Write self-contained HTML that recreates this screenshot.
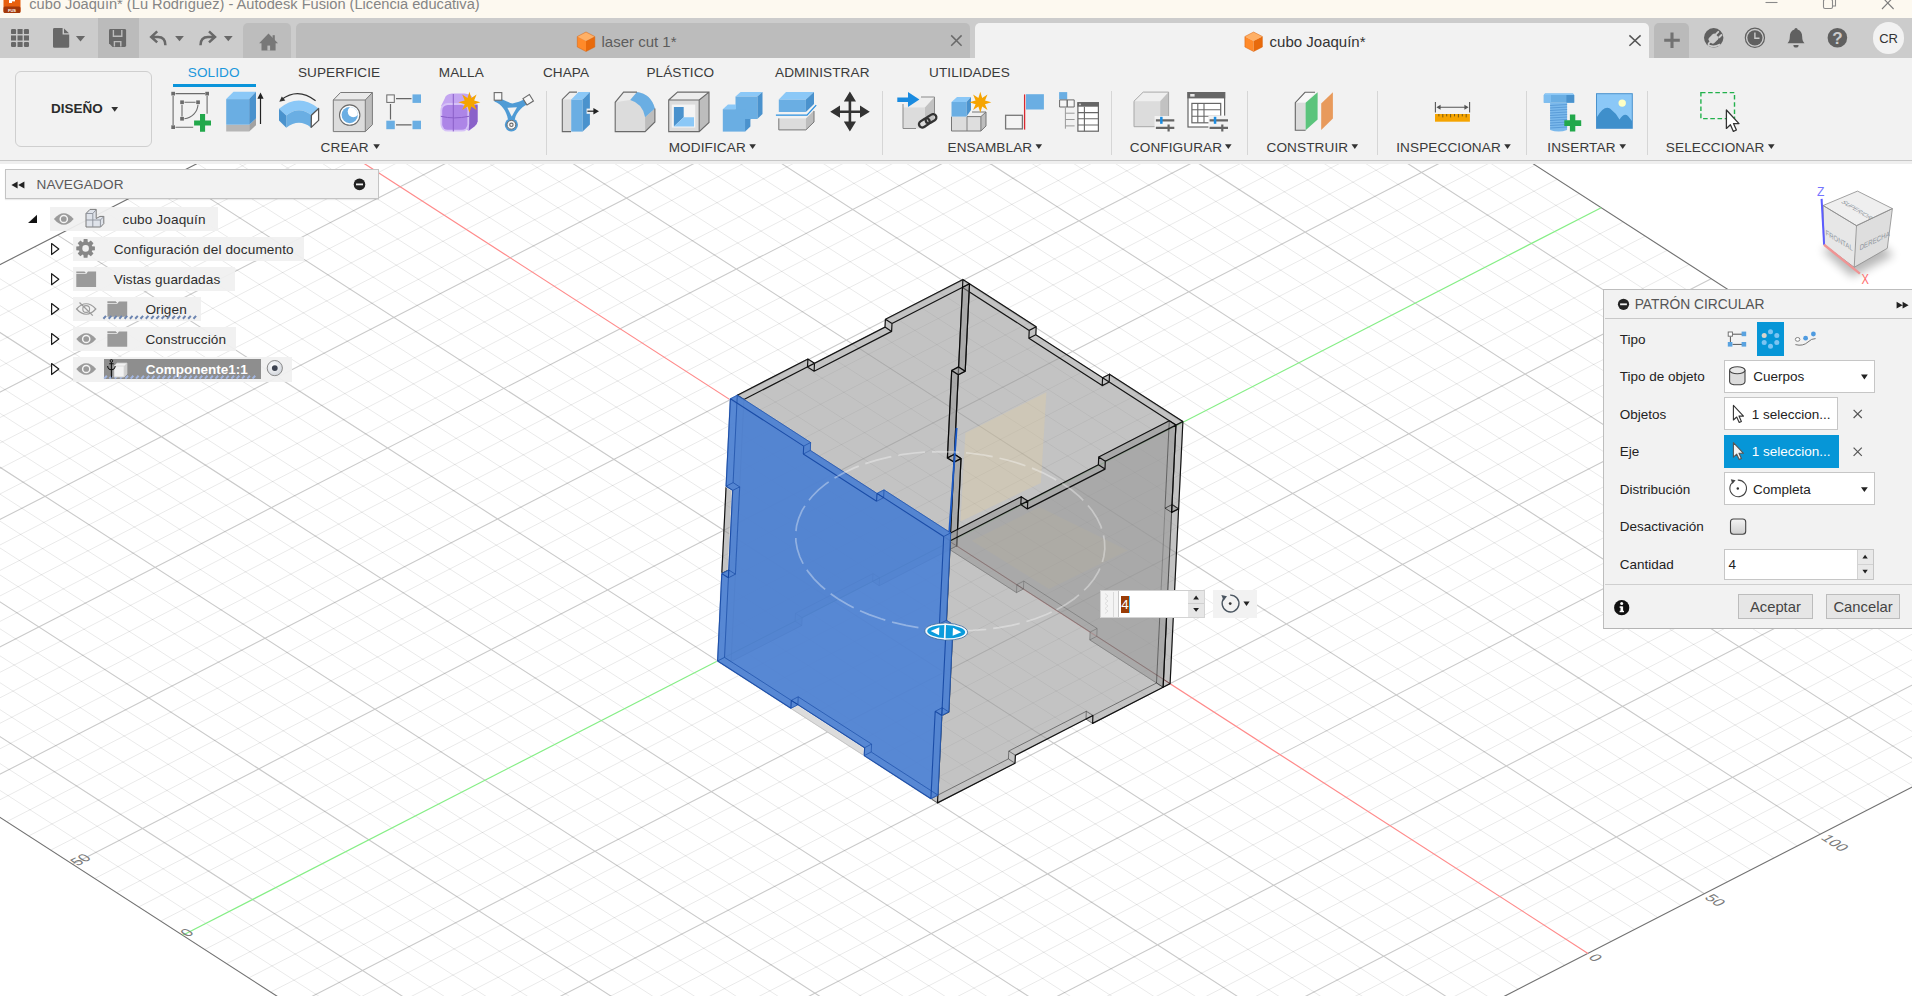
<!DOCTYPE html>
<html lang="es"><head><meta charset="utf-8"><title>cubo Joaquín - Autodesk Fusion</title>
<style>
html,body{margin:0;padding:0}
body{width:1912px;height:996px;overflow:hidden;background:#fff;position:relative;font-family:"Liberation Sans",sans-serif;font-size:13.6px;color:#3a3a3a}
#cv{position:absolute;left:0;top:0;width:1912px;height:996px}

.t{position:absolute;white-space:nowrap;line-height:20px;height:20px}
.b{position:absolute;box-sizing:border-box}
svg.ov{position:absolute;left:0;top:0;overflow:visible}

</style></head><body>
<svg id="cv" width="1912" height="996" viewBox="0 0 1912 996">
<path d="M-455.2,523.6 L963.3,-204 M-433.2,537.8 L985.3,-189.8 M-411.2,552 L1007.3,-175.6 M-389.2,566.2 L1029.3,-161.4 M-345.2,594.6 L1073.3,-133 M-323.2,608.8 L1095.3,-118.8 M-301.2,623 L1117.3,-104.6 M-279.2,637.2 L1139.3,-90.4 M-235.2,665.6 L1183.3,-62 M-213.2,679.8 L1205.3,-47.8 M-191.2,694 L1227.3,-33.6 M-169.2,708.2 L1249.3,-19.4 M-125.2,736.5 L1293.3,9 M-103.2,750.7 L1315.3,23.2 M-81.2,764.9 L1337.3,37.4 M-59.2,779.1 L1359.3,51.6 M-15.2,807.5 L1403.3,80 M6.7,821.7 L1425.2,94.1 M28.7,835.9 L1447.2,108.3 M50.7,850.1 L1469.2,122.5 M94.7,878.5 L1513.2,150.9 M116.7,892.7 L1535.2,165.1 M138.7,906.9 L1557.2,179.3 M160.7,921.1 L1579.2,193.5 M204.7,949.5 L1623.2,221.9 M226.7,963.7 L1645.2,236.1 M248.7,977.9 L1667.2,250.3 M270.7,992.1 L1689.2,264.5 M314.7,1020.5 L1733.2,292.9 M336.7,1034.7 L1755.2,307.1 M358.7,1048.8 L1777.2,321.3 M380.7,1063 L1799.2,335.5 M424.7,1091.4 L1843.2,363.9 M446.7,1105.6 L1865.2,378.1 M468.7,1119.8 L1887.2,392.3 M490.7,1134 L1909.2,406.5 M534.7,1162.4 L1953.2,434.8 M556.7,1176.6 L1975.2,449 M578.7,1190.8 L1997.2,463.2 M600.7,1205 L2019.2,477.4 M644.7,1233.4 L2063.1,505.8 M666.6,1247.6 L2085.1,520 M688.6,1261.8 L2107.1,534.2 M710.6,1276 L2129.1,548.4 M754.6,1304.4 L2173.1,576.8 M776.6,1318.6 L2195.1,591 M798.6,1332.8 L2217.1,605.2 M-453.9,497.5 L843.9,1335 M-430.7,485.6 L867.1,1323.1 M-384.2,461.7 L913.6,1299.2 M-360.9,449.8 L936.9,1287.3 M-337.7,437.9 L960.1,1275.4 M-314.4,425.9 L983.4,1263.5 M-267.9,402.1 L1029.9,1239.6 M-244.6,390.1 L1053.2,1227.7 M-221.4,378.2 L1076.4,1215.8 M-198.1,366.3 L1099.7,1203.8 M-151.6,342.4 L1146.2,1180 M-128.4,330.5 L1169.4,1168 M-105.1,318.6 L1192.7,1156.1 M-81.9,306.6 L1215.9,1144.2 M-35.3,282.8 L1262.5,1120.3 M-12.1,270.9 L1285.7,1108.4 M11.2,258.9 L1309,1096.5 M34.4,247 L1332.2,1084.6 M80.9,223.2 L1378.7,1060.7 M104.2,211.2 L1402,1048.8 M127.4,199.3 L1425.2,1036.8 M150.7,187.4 L1448.5,1024.9 M197.2,163.5 L1495,1001.1 M220.4,151.6 L1518.2,989.1 M243.7,139.7 L1541.5,977.2 M267,127.7 L1564.8,965.3 M313.5,103.9 L1611.3,941.4 M336.7,92 L1634.5,929.5 M360,80 L1657.8,917.6 M383.2,68.1 L1681,905.6 M429.7,44.2 L1727.5,881.8 M453,32.3 L1750.8,869.9 M476.2,20.4 L1774,857.9 M499.5,8.5 L1797.3,846 M546,-15.4 L1843.8,822.2 M569.3,-27.3 L1867.1,810.2 M592.5,-39.2 L1890.3,798.3 M615.8,-51.2 L1913.6,786.4 M662.3,-75 L1960.1,762.5 M685.5,-87 L1983.3,750.6 M708.8,-98.9 L2006.6,738.7 M732,-110.8 L2029.8,726.7 M778.5,-134.7 L2076.3,702.9 M801.8,-146.6 L2099.6,691 M825.1,-158.5 L2122.9,679 M848.3,-170.4 L2146.1,667.1 M894.8,-194.3 L2192.6,643.2 M918.1,-206.2 L2215.9,631.3" stroke="#000" stroke-opacity=".085" stroke-width="1" fill="none"/>
<path d="M-367.2,580.4 L1051.3,-147.2 M-257.2,651.4 L1161.3,-76.2 M-147.2,722.3 L1271.3,-5.2 M-37.2,793.3 L1381.3,65.8 M72.7,864.3 L1491.2,136.7 M292.7,1006.3 L1711.2,278.7 M402.7,1077.2 L1821.2,349.7 M512.7,1148.2 L1931.2,420.6 M622.7,1219.2 L2041.2,491.6 M732.6,1290.2 L2151.1,562.6 M-407.4,473.6 L890.4,1311.2 M-291.1,414 L1006.7,1251.5 M-174.9,354.4 L1122.9,1191.9 M-58.6,294.7 L1239.2,1132.3 M57.7,235.1 L1355.5,1072.6 M173.9,175.4 L1471.7,1013 M406.5,56.2 L1704.3,893.7 M522.7,-3.5 L1820.5,834.1 M639,-63.1 L1936.8,774.4 M755.3,-122.7 L2053.1,714.8 M871.6,-182.4 L2169.4,655.2" stroke="#000" stroke-opacity=".21" stroke-width="1.1" fill="none"/>
<path d="M-477.2,509.4 L820.6,1347 L2239.1,619.4 L941.3,-218.2 Z" stroke="#727272" stroke-width="1.15" fill="none"/>
<path d="M290.2,115.8 L1588,953.4" stroke="#ff8a8a" stroke-width="1.2" fill="none"/>
<path d="M182.7,935.3 L1601.2,207.7" stroke="#86ee86" stroke-width="1.2" fill="none"/>
<g opacity=".56"><path d="M1170.1,683.6 L1096.8,636.3 L1097.1,628.5 L1023.8,581.1 L1023.4,589 L956.7,545.9 L961,458.6 L954.4,454.3 L958.6,366.9 L965.2,371.2 L969.5,283.8 L1036.2,326.8 L1035.8,334.7 L1109.2,382 L1109.5,374.2 L1182.9,421.5 L1178.6,508.9 L1172,504.6 L1167.7,592 L1174.3,596.3 Z M1163.1,687.2 L1089.8,639.9 L1090.2,632 L1016.8,584.7 L1016.5,592.6 L949.7,549.5 L954,462.1 L947.4,457.9 L951.7,370.5 L958.3,374.7 L962.5,287.4 L1029.2,330.4 L1028.9,338.3 L1102.2,385.6 L1102.6,377.7 L1175.9,425.1 L1171.6,512.4 L1165,508.2 L1160.8,595.6 L1167.4,599.8 Z M1163.1,687.2 L1089.8,639.9 L1096.8,636.3 L1170.1,683.6 Z M1089.8,639.9 L1090.2,632 L1097.1,628.5 L1096.8,636.3 Z M1090.2,632 L1016.8,584.7 L1023.8,581.1 L1097.1,628.5 Z M1023.8,581.1 L1023.4,589 L1016.5,592.6 L1016.8,584.7 Z M1016.5,592.6 L949.7,549.5 L956.7,545.9 L1023.4,589 Z M949.7,549.5 L954,462.1 L961,458.6 L956.7,545.9 Z M954,462.1 L947.4,457.9 L954.4,454.3 L961,458.6 Z M947.4,457.9 L951.7,370.5 L958.6,366.9 L954.4,454.3 Z M958.6,366.9 L965.2,371.2 L958.3,374.7 L951.7,370.5 Z M958.3,374.7 L962.5,287.4 L969.5,283.8 L965.2,371.2 Z M969.5,283.8 L1036.2,326.8 L1029.2,330.4 L962.5,287.4 Z M1036.2,326.8 L1035.8,334.7 L1028.9,338.3 L1029.2,330.4 Z M1035.8,334.7 L1109.2,382 L1102.2,385.6 L1028.9,338.3 Z M1102.2,385.6 L1102.6,377.7 L1109.5,374.2 L1109.2,382 Z M1109.5,374.2 L1182.9,421.5 L1175.9,425.1 L1102.6,377.7 Z M1182.9,421.5 L1178.6,508.9 L1171.6,512.4 L1175.9,425.1 Z M1171.6,512.4 L1165,508.2 L1172,504.6 L1178.6,508.9 Z M1172,504.6 L1167.7,592 L1160.8,595.6 L1165,508.2 Z M1167.7,592 L1174.3,596.3 L1167.4,599.8 L1160.8,595.6 Z M1174.3,596.3 L1170.1,683.6 L1163.1,687.2 L1167.4,599.8 Z" fill="#969696" stroke="#969696" stroke-width=".6" stroke-linejoin="round"/></g>
<path d="M1170.1,683.6 L1096.8,636.3 M1163.1,687.2 L1089.8,639.9 M1096.8,636.3 L1097.1,628.5 M1089.8,639.9 L1090.2,632 M1096.8,636.3 L1089.8,639.9 M1097.1,628.5 L1023.8,581.1 M1090.2,632 L1016.8,584.7 M1097.1,628.5 L1090.2,632 M1023.8,581.1 L1023.4,589 M1016.8,584.7 L1016.5,592.6 M1023.8,581.1 L1016.8,584.7 M1023.4,589 L956.7,545.9 M1016.5,592.6 L949.7,549.5 M1023.4,589 L1016.5,592.6 M956.7,545.9 L949.7,549.5 M1171.6,512.4 L1165,508.2 M1178.6,508.9 L1171.6,512.4 M1172,504.6 L1167.7,592 M1165,508.2 L1160.8,595.6 M1172,504.6 L1165,508.2 M1167.7,592 L1174.3,596.3 M1160.8,595.6 L1167.4,599.8 M1167.7,592 L1160.8,595.6" stroke="#000" stroke-opacity=".42" stroke-width="1" fill="none"/>
<path d="M1170.1,683.6 L1163.1,687.2 M956.7,545.9 L961,458.6 M949.7,549.5 L954,462.1 M961,458.6 L954.4,454.3 M954,462.1 L947.4,457.9 M961,458.6 L954,462.1 M954.4,454.3 L958.6,366.9 M947.4,457.9 L951.7,370.5 M954.4,454.3 L947.4,457.9 M958.6,366.9 L965.2,371.2 M951.7,370.5 L958.3,374.7 M958.6,366.9 L951.7,370.5 M965.2,371.2 L969.5,283.8 M958.3,374.7 L962.5,287.4 M965.2,371.2 L958.3,374.7 M969.5,283.8 L1036.2,326.8 M962.5,287.4 L1029.2,330.4 M969.5,283.8 L962.5,287.4 M1036.2,326.8 L1035.8,334.7 M1029.2,330.4 L1028.9,338.3 M1036.2,326.8 L1029.2,330.4 M1035.8,334.7 L1109.2,382 M1028.9,338.3 L1102.2,385.6 M1035.8,334.7 L1028.9,338.3 M1109.2,382 L1109.5,374.2 M1102.2,385.6 L1102.6,377.7 M1109.2,382 L1102.2,385.6 M1109.5,374.2 L1182.9,421.5 M1102.6,377.7 L1175.9,425.1 M1109.5,374.2 L1102.6,377.7 M1182.9,421.5 L1178.6,508.9 M1175.9,425.1 L1171.6,512.4 M1182.9,421.5 L1175.9,425.1 M1178.6,508.9 L1172,504.6 M1174.3,596.3 L1170.1,683.6 M1167.4,599.8 L1163.1,687.2 M1174.3,596.3 L1167.4,599.8" stroke="#000" stroke-opacity=".9" stroke-width="1.2" fill="none" stroke-linecap="round"/>
<g opacity=".56"><path d="M950.1,541.7 L872.6,581.4 L873,573.6 L795.5,613.3 L795.1,621.2 L724.5,657.4 L728.8,570 L721.8,573.6 L726.1,486.2 L733.1,482.6 L737.3,395.2 L807.9,359 L807.5,366.9 L885,327.1 L885.4,319.3 L962.9,279.5 L958.6,366.9 L951.7,370.5 L947.4,457.9 L954.4,454.3 Z M956.7,545.9 L879.2,585.7 L879.6,577.8 L802.1,617.6 L801.7,625.5 L731.1,661.6 L735.4,574.2 L728.4,577.8 L732.7,490.4 L739.7,486.9 L743.9,399.5 L814.5,363.3 L814.1,371.2 L891.6,331.4 L892,323.5 L969.5,283.8 L965.2,371.2 L958.3,374.7 L954,462.1 L961,458.6 Z M956.7,545.9 L879.2,585.7 L872.6,581.4 L950.1,541.7 Z M872.6,581.4 L873,573.6 L879.6,577.8 L879.2,585.7 Z M879.6,577.8 L802.1,617.6 L795.5,613.3 L873,573.6 Z M802.1,617.6 L801.7,625.5 L795.1,621.2 L795.5,613.3 Z M801.7,625.5 L731.1,661.6 L724.5,657.4 L795.1,621.2 Z M724.5,657.4 L728.8,570 L735.4,574.2 L731.1,661.6 Z M735.4,574.2 L728.4,577.8 L721.8,573.6 L728.8,570 Z M721.8,573.6 L726.1,486.2 L732.7,490.4 L728.4,577.8 Z M726.1,486.2 L733.1,482.6 L739.7,486.9 L732.7,490.4 Z M733.1,482.6 L737.3,395.2 L743.9,399.5 L739.7,486.9 Z M737.3,395.2 L807.9,359 L814.5,363.3 L743.9,399.5 Z M814.5,363.3 L814.1,371.2 L807.5,366.9 L807.9,359 Z M807.5,366.9 L885,327.1 L891.6,331.4 L814.1,371.2 Z M885,327.1 L885.4,319.3 L892,323.5 L891.6,331.4 Z M885.4,319.3 L962.9,279.5 L969.5,283.8 L892,323.5 Z M969.5,283.8 L965.2,371.2 L958.6,366.9 L962.9,279.5 Z M965.2,371.2 L958.3,374.7 L951.7,370.5 L958.6,366.9 Z M958.3,374.7 L954,462.1 L947.4,457.9 L951.7,370.5 Z M947.4,457.9 L954.4,454.3 L961,458.6 L954,462.1 Z M961,458.6 L956.7,545.9 L950.1,541.7 L954.4,454.3 Z" fill="#969696" stroke="#969696" stroke-width=".6" stroke-linejoin="round"/></g>
<path d="M950.1,541.7 L872.6,581.4 M956.7,545.9 L879.2,585.7 M950.1,541.7 L956.7,545.9 M872.6,581.4 L873,573.6 M879.2,585.7 L879.6,577.8 M872.6,581.4 L879.2,585.7 M873,573.6 L795.5,613.3 M879.6,577.8 L802.1,617.6 M873,573.6 L879.6,577.8 M795.5,613.3 L795.1,621.2 M802.1,617.6 L801.7,625.5 M795.5,613.3 L802.1,617.6 M795.1,621.2 L724.5,657.4 M801.7,625.5 L731.1,661.6 M795.1,621.2 L801.7,625.5 M724.5,657.4 L728.8,570 M731.1,661.6 L735.4,574.2 M724.5,657.4 L731.1,661.6 M735.4,574.2 L728.4,577.8 M728.8,570 L735.4,574.2 M728.4,577.8 L732.7,490.4 M726.1,486.2 L733.1,482.6 M732.7,490.4 L739.7,486.9 M726.1,486.2 L732.7,490.4 M733.1,482.6 L737.3,395.2 M739.7,486.9 L743.9,399.5 M733.1,482.6 L739.7,486.9" stroke="#000" stroke-opacity=".42" stroke-width="1" fill="none"/>
<path d="M728.8,570 L721.8,573.6 M721.8,573.6 L726.1,486.2 M721.8,573.6 L728.4,577.8 M737.3,395.2 L807.9,359 M743.9,399.5 L814.5,363.3 M737.3,395.2 L743.9,399.5 M807.9,359 L807.5,366.9 M814.5,363.3 L814.1,371.2 M807.9,359 L814.5,363.3 M807.5,366.9 L885,327.1 M814.1,371.2 L891.6,331.4 M807.5,366.9 L814.1,371.2 M885,327.1 L885.4,319.3 M891.6,331.4 L892,323.5 M885,327.1 L891.6,331.4 M885.4,319.3 L962.9,279.5 M892,323.5 L969.5,283.8 M885.4,319.3 L892,323.5 M962.9,279.5 L958.6,366.9 M969.5,283.8 L965.2,371.2 M962.9,279.5 L969.5,283.8 M958.6,366.9 L951.7,370.5 M965.2,371.2 L958.3,374.7 M958.6,366.9 L965.2,371.2 M951.7,370.5 L947.4,457.9 M958.3,374.7 L954,462.1 M951.7,370.5 L958.3,374.7 M947.4,457.9 L954.4,454.3 M954,462.1 L961,458.6 M947.4,457.9 L954,462.1 M954.4,454.3 L950.1,541.7 M961,458.6 L956.7,545.9 M954.4,454.3 L961,458.6" stroke="#000" stroke-opacity=".9" stroke-width="1.2" fill="none" stroke-linecap="round"/>
<path d="M965.4,433 L1046.4,392.2 L1040.9,482.9 L960.5,521.5 Z" fill="#e8cf9a" fill-opacity=".3"/>
<path d="M971.8,540.8 L1039.3,507 L1127.7,550.4 L1049,589 Z" fill="#e8cf9a" fill-opacity=".24"/>
<g opacity=".56"><path d="M941.8,715.5 L948.8,711.9 L953,624.6 L946.1,628.1 L950.3,540.8 L1027.8,501 L1027.4,508.9 L1105,469.1 L1105.3,461.2 L1175.9,425.1 L1171.6,512.4 L1178.6,508.9 L1174.3,596.3 L1167.4,599.8 L1163.1,687.2 L1092.6,723.4 L1092.9,715.5 L1015.4,755.3 L1015,763.2 L937.5,802.9 Z M935.2,711.3 L942.2,707.7 L946.4,620.3 L939.5,623.9 L943.7,536.5 L1021.2,496.7 L1020.8,504.6 L1098.4,464.8 L1098.7,457 L1169.3,420.8 L1165,508.2 L1172,504.6 L1167.7,592 L1160.8,595.6 L1156.5,683 L1086,719.1 L1086.3,711.3 L1008.8,751 L1008.4,758.9 L930.9,798.7 Z M930.9,798.7 L1008.4,758.9 L1015,763.2 L937.5,802.9 Z M1008.4,758.9 L1008.8,751 L1015.4,755.3 L1015,763.2 Z M1008.8,751 L1086.3,711.3 L1092.9,715.5 L1015.4,755.3 Z M1092.9,715.5 L1092.6,723.4 L1086,719.1 L1086.3,711.3 Z M1086,719.1 L1156.5,683 L1163.1,687.2 L1092.6,723.4 Z M1156.5,683 L1160.8,595.6 L1167.4,599.8 L1163.1,687.2 Z M1160.8,595.6 L1167.7,592 L1174.3,596.3 L1167.4,599.8 Z M1167.7,592 L1172,504.6 L1178.6,508.9 L1174.3,596.3 Z M1178.6,508.9 L1171.6,512.4 L1165,508.2 L1172,504.6 Z M1165,508.2 L1169.3,420.8 L1175.9,425.1 L1171.6,512.4 Z M1175.9,425.1 L1105.3,461.2 L1098.7,457 L1169.3,420.8 Z M1105.3,461.2 L1105,469.1 L1098.4,464.8 L1098.7,457 Z M1105,469.1 L1027.4,508.9 L1020.8,504.6 L1098.4,464.8 Z M1020.8,504.6 L1021.2,496.7 L1027.8,501 L1027.4,508.9 Z M1027.8,501 L950.3,540.8 L943.7,536.5 L1021.2,496.7 Z M950.3,540.8 L946.1,628.1 L939.5,623.9 L943.7,536.5 Z M939.5,623.9 L946.4,620.3 L953,624.6 L946.1,628.1 Z M953,624.6 L948.8,711.9 L942.2,707.7 L946.4,620.3 Z M948.8,711.9 L941.8,715.5 L935.2,711.3 L942.2,707.7 Z M941.8,715.5 L937.5,802.9 L930.9,798.7 L935.2,711.3 Z" fill="#969696" stroke="#969696" stroke-width=".6" stroke-linejoin="round"/></g>
<path d="M930.9,798.7 L1008.4,758.9 M937.5,802.9 L930.9,798.7 M1008.4,758.9 L1008.8,751 M1015,763.2 L1008.4,758.9 M1008.8,751 L1086.3,711.3 M1015.4,755.3 L1008.8,751 M1086.3,711.3 L1086,719.1 M1092.9,715.5 L1086.3,711.3 M1086,719.1 L1156.5,683 M1092.6,723.4 L1086,719.1 M1156.5,683 L1160.8,595.6 M1163.1,687.2 L1156.5,683 M1160.8,595.6 L1167.7,592 M1167.4,599.8 L1160.8,595.6 M1167.7,592 L1172,504.6 M1174.3,596.3 L1167.7,592 M1172,504.6 L1165,508.2 M1178.6,508.9 L1172,504.6 M1165,508.2 L1169.3,420.8 M1171.6,512.4 L1165,508.2 M943.7,536.5 L939.5,623.9 M939.5,623.9 L946.4,620.3 M946.1,628.1 L939.5,623.9 M946.4,620.3 L942.2,707.7 M953,624.6 L946.4,620.3 M942.2,707.7 L935.2,711.3 M948.8,711.9 L942.2,707.7 M935.2,711.3 L930.9,798.7 M941.8,715.5 L935.2,711.3" stroke="#000" stroke-opacity=".42" stroke-width="1" fill="none"/>
<path d="M937.5,802.9 L1015,763.2 M1015,763.2 L1015.4,755.3 M1015.4,755.3 L1092.9,715.5 M1092.9,715.5 L1092.6,723.4 M1092.6,723.4 L1163.1,687.2 M1163.1,687.2 L1167.4,599.8 M1167.4,599.8 L1174.3,596.3 M1174.3,596.3 L1178.6,508.9 M1178.6,508.9 L1171.6,512.4 M1171.6,512.4 L1175.9,425.1 M1175.9,425.1 L1105.3,461.2 M1169.3,420.8 L1098.7,457 M1175.9,425.1 L1169.3,420.8 M1105.3,461.2 L1105,469.1 M1098.7,457 L1098.4,464.8 M1105.3,461.2 L1098.7,457 M1105,469.1 L1027.4,508.9 M1098.4,464.8 L1020.8,504.6 M1105,469.1 L1098.4,464.8 M1027.4,508.9 L1027.8,501 M1020.8,504.6 L1021.2,496.7 M1027.4,508.9 L1020.8,504.6 M1027.8,501 L950.3,540.8 M1021.2,496.7 L943.7,536.5 M1027.8,501 L1021.2,496.7 M950.3,540.8 L946.1,628.1 M950.3,540.8 L943.7,536.5 M946.1,628.1 L953,624.6 M953,624.6 L948.8,711.9 M948.8,711.9 L941.8,715.5 M941.8,715.5 L937.5,802.9" stroke="#000" stroke-opacity=".9" stroke-width="1.2" fill="none" stroke-linecap="round"/>
<path d="M791.3,700.4 L864.6,747.7 L864.2,755.6 L790.9,708.3 Z" fill="#dcdcdc" stroke="#bdbdbd" stroke-width=".6"/>
<path d="M956.6,428 L949,536" stroke="#1a58c4" stroke-width="1.9" fill="none"/>
<path d="M717.6,661 L790.9,708.3 L791.3,700.4 L864.6,747.7 L864.2,755.6 L930.9,798.7 L935.2,711.3 L941.8,715.5 L946.1,628.1 L939.5,623.9 L943.7,536.5 L877,493.4 L876.6,501.3 L803.3,454 L803.7,446.1 L730.4,398.8 L726.1,486.2 L732.7,490.4 L728.4,577.8 L721.8,573.6 Z" fill="none" stroke="#f0f0f0" stroke-opacity=".8" stroke-width="2.2" stroke-linejoin="round"/>
<g opacity=".95"><path d="M721.8,573.6 L728.4,577.8 L732.7,490.4 L726.1,486.2 L730.4,398.8 L803.7,446.1 L803.3,454 L876.6,501.3 L877,493.4 L943.7,536.5 L939.5,623.9 L946.1,628.1 L941.8,715.5 L935.2,711.3 L930.9,798.7 L864.2,755.6 L864.6,747.7 L791.3,700.4 L790.9,708.3 L717.6,661 Z M728.8,570 L735.4,574.2 L739.7,486.9 L733.1,482.6 L737.3,395.2 L810.6,442.5 L810.3,450.4 L883.6,497.7 L884,489.9 L950.7,532.9 L946.4,620.3 L953,624.6 L948.8,711.9 L942.2,707.7 L937.9,795.1 L871.2,752 L871.6,744.1 L798.2,696.8 L797.9,704.7 L724.5,657.4 Z M724.5,657.4 L797.9,704.7 L790.9,708.3 L717.6,661 Z M790.9,708.3 L791.3,700.4 L798.2,696.8 L797.9,704.7 Z M798.2,696.8 L871.6,744.1 L864.6,747.7 L791.3,700.4 Z M871.6,744.1 L871.2,752 L864.2,755.6 L864.6,747.7 Z M871.2,752 L937.9,795.1 L930.9,798.7 L864.2,755.6 Z M930.9,798.7 L935.2,711.3 L942.2,707.7 L937.9,795.1 Z M942.2,707.7 L948.8,711.9 L941.8,715.5 L935.2,711.3 Z M941.8,715.5 L946.1,628.1 L953,624.6 L948.8,711.9 Z M946.1,628.1 L939.5,623.9 L946.4,620.3 L953,624.6 Z M939.5,623.9 L943.7,536.5 L950.7,532.9 L946.4,620.3 Z M943.7,536.5 L877,493.4 L884,489.9 L950.7,532.9 Z M884,489.9 L883.6,497.7 L876.6,501.3 L877,493.4 Z M876.6,501.3 L803.3,454 L810.3,450.4 L883.6,497.7 Z M803.3,454 L803.7,446.1 L810.6,442.5 L810.3,450.4 Z M803.7,446.1 L730.4,398.8 L737.3,395.2 L810.6,442.5 Z M737.3,395.2 L733.1,482.6 L726.1,486.2 L730.4,398.8 Z M733.1,482.6 L739.7,486.9 L732.7,490.4 L726.1,486.2 Z M739.7,486.9 L735.4,574.2 L728.4,577.8 L732.7,490.4 Z M728.4,577.8 L721.8,573.6 L728.8,570 L735.4,574.2 Z M728.8,570 L724.5,657.4 L717.6,661 L721.8,573.6 Z" fill="#4f82d2" stroke="#4f82d2" stroke-width=".6" stroke-linejoin="round"/></g>
<path d="M724.5,657.4 L797.9,704.7 M717.6,661 L724.5,657.4 M797.9,704.7 L798.2,696.8 M790.9,708.3 L797.9,704.7 M798.2,696.8 L871.6,744.1 M791.3,700.4 L798.2,696.8 M871.6,744.1 L871.2,752 M864.6,747.7 L871.6,744.1 M871.2,752 L937.9,795.1 M864.2,755.6 L871.2,752 M937.9,795.1 L942.2,707.7 M930.9,798.7 L937.9,795.1 M942.2,707.7 L948.8,711.9 M935.2,711.3 L942.2,707.7 M948.8,711.9 L953,624.6 M941.8,715.5 L948.8,711.9 M953,624.6 L946.4,620.3 M946.1,628.1 L953,624.6 M946.4,620.3 L950.7,532.9 M939.5,623.9 L946.4,620.3 M950.7,532.9 L884,489.9 M943.7,536.5 L950.7,532.9 M884,489.9 L883.6,497.7 M877,493.4 L884,489.9 M883.6,497.7 L810.3,450.4 M876.6,501.3 L883.6,497.7 M810.3,450.4 L810.6,442.5 M803.3,454 L810.3,450.4 M810.6,442.5 L737.3,395.2 M803.7,446.1 L810.6,442.5 M737.3,395.2 L733.1,482.6 M730.4,398.8 L737.3,395.2 M733.1,482.6 L739.7,486.9 M726.1,486.2 L733.1,482.6 M739.7,486.9 L735.4,574.2 M732.7,490.4 L739.7,486.9 M735.4,574.2 L728.8,570 M728.4,577.8 L735.4,574.2 M728.8,570 L724.5,657.4 M721.8,573.6 L728.8,570" stroke="#0b3f9c" stroke-opacity=".55" stroke-width="1" fill="none"/>
<path d="M717.6,661 L790.9,708.3 M790.9,708.3 L791.3,700.4 M791.3,700.4 L864.6,747.7 M864.6,747.7 L864.2,755.6 M864.2,755.6 L930.9,798.7 M930.9,798.7 L935.2,711.3 M935.2,711.3 L941.8,715.5 M941.8,715.5 L946.1,628.1 M946.1,628.1 L939.5,623.9 M939.5,623.9 L943.7,536.5 M943.7,536.5 L877,493.4 M877,493.4 L876.6,501.3 M876.6,501.3 L803.3,454 M803.3,454 L803.7,446.1 M803.7,446.1 L730.4,398.8 M730.4,398.8 L726.1,486.2 M726.1,486.2 L732.7,490.4 M732.7,490.4 L728.4,577.8 M728.4,577.8 L721.8,573.6 M721.8,573.6 L717.6,661" stroke="#0b3f9c" stroke-opacity=".8" stroke-width="1.1" fill="none"/>
<path d="M1056.5,609.8 L1065.8,604.5 L1074.3,598.7 L1081.9,592.5 L1088.5,585.9 L1094,579 L1098.4,571.8 L1101.7,564.3 L1103.8,556.7 L1104.8,549 L1104.5,541.2 L1103.2,533.4 L1100.6,525.6 L1096.9,518 L1092.1,510.5 L1086.2,503.3 L1079.3,496.4 L1071.4,489.8 L1062.5,483.6 L1052.8,477.9 L1042.4,472.6 L1031.2,467.8 L1019.4,463.6 L1007.1,460 L994.4,457 L981.3,454.7 L968,453 L954.5,452 L941,451.7 L927.6,452 L914.4,453 L901.4,454.7 L888.8,457.1 L876.7,460.1 L865.1,463.7 L854.2,467.9 L844,472.7 L834.6,477.9 L826.1,483.7 L818.5,489.9 L812,496.5 L806.5,503.4 L802,510.6 L798.8,518.1 L796.6,525.7 L795.7,533.5 L795.9,541.3 L797.3,549.1 L799.8,556.8 L803.5,564.5 L808.3,571.9 L814.2,579.1 L821.2,586 L829.1,592.6 L837.9,598.8 L847.6,604.6 L858,609.9 L869.2,614.6 L881,618.8 L893.3,622.4 L906.1,625.4 L919.1,627.7 L932.5,629.4 L945.9,630.4 L959.4,630.8 L972.8,630.4 L986.1,629.4 L999,627.7 L1011.6,625.4 L1023.8,622.4 L1035.3,618.7 L1046.3,614.5 L1056.5,609.8 Z" fill="none" stroke="#ffffff" stroke-opacity=".36" stroke-width="1.7" stroke-dasharray="27 7"/>
<text transform="matrix(0.7836 0.5057 -0.8284 0.4249 1587.6 957.7)" font-size="16" fill="#7a7a7a" font-family="Liberation Sans, sans-serif">0</text>
<text transform="matrix(0.7836 0.5057 -0.8284 0.4249 1703.8 898.0)" font-size="16" fill="#7a7a7a" font-family="Liberation Sans, sans-serif">50</text>
<text transform="matrix(0.7836 0.5057 -0.8284 0.4249 1820.1 838.4)" font-size="16" fill="#7a7a7a" font-family="Liberation Sans, sans-serif">100</text>
<text transform="matrix(0.8284 -0.4249 0.7836 0.5057 187.4 937.2)" font-size="16" fill="#7a7a7a" font-family="Liberation Sans, sans-serif">0</text>
<text transform="matrix(0.8284 -0.4249 0.7836 0.5057 77.4 866.2)" font-size="16" fill="#7a7a7a" font-family="Liberation Sans, sans-serif">50</text>
<g transform="rotate(2 946.2 631.6)"><ellipse cx="946.2" cy="631.6" rx="21.4" ry="8.5" fill="#f4f8fc" stroke="#3d6a9a" stroke-width=".8"/><ellipse cx="946.2" cy="631.6" rx="19" ry="6.6" fill="#0a9bdc"/><rect x="944.1" y="623.6" width="1.7" height="16" fill="#f4f8fc"/><path d="M930.6,631.6 L939.2,627.6 V635.6 Z M961.4,631.6 L952.8,627.6 V635.6 Z" fill="#fff"/></g>
<defs><filter id="bl" x="-30%" y="-60%" width="160%" height="220%"><feGaussianBlur stdDeviation="5"/></filter></defs>
<path d="M1822.0,250.0 L1852.0,277.0 L1894.0,255.0 L1864.0,232.0 Z" fill="#000" opacity=".28" filter="url(#bl)"/>
<path d="M1823.1,205.5 L1857.5,191.1 L1892.4,208.6 L1856.5,225.7 Z" fill="#efefef"/>
<path d="M1823.1,205.5 L1856.5,225.7 L1854.2,267.3 L1824.1,244.7 Z" fill="#e7e7e7"/>
<path d="M1856.5,225.7 L1892.4,208.6 L1887.3,248.3 L1854.2,267.3 Z" fill="#dedede"/>
<path d="M1823.1,205.5 L1857.5,191.1 L1892.4,208.6 L1887.3,248.3 L1854.2,267.3 L1824.1,244.7 Z M1823.1,205.5 L1856.5,225.7 L1892.4,208.6 L1856.5,225.7 Z M1856.5,225.7 L1854.2,267.3" fill="none" stroke="#8c8c8c" stroke-width=".8"/>
<text transform="matrix(0.2755 0.1666 -0.3229 0.1351 1840.6 202.2)" font-size="20" fill="#8d949c" font-family="Liberation Sans, sans-serif">SUPERIOR</text>
<text transform="matrix(0.2926 0.1770 0.0097 0.3799 1825.8 235.0)" font-size="20" fill="#8d949c" font-family="Liberation Sans, sans-serif">FRONTAL</text>
<text transform="matrix(0.3088 -0.1471 -0.0210 0.3794 1859.4 250.4)" font-size="20" fill="#8d949c" font-family="Liberation Sans, sans-serif">DERECHA</text>
<path d="M1824.1,244.7 L1821.6,198.9" stroke="#5c5cff" stroke-width="2"/>
<path d="M1824.1,244.7 L1859.9,273.6" stroke="#f09494" stroke-width="2.4"/>
<text x="1817" y="196" font-size="13.6" fill="#7474ff" font-family="Liberation Sans, sans-serif" textLength="7.4" lengthAdjust="spacingAndGlyphs">Z</text>
<text x="1861.6" y="284" font-size="15.4" fill="#ff6e6e" font-family="Liberation Sans, sans-serif" textLength="7.4" lengthAdjust="spacingAndGlyphs">X</text>
</svg>
<div class="b" style="left:0.0px;top:0.0px;width:1912.0px;height:18.0px;background:#fdf9f0"></div>
<div class="b" style="left:0.0px;top:18.0px;width:1912.0px;height:40.0px;background:#cccccc"></div>
<div class="b" style="left:97.5px;top:18.0px;width:41.5px;height:40.0px;background:#bbbbbb"></div>
<div class="b" style="left:242.8px;top:23.0px;width:48.2px;height:35.0px;background:#bdbdbd;border-radius:5px 5px 0 0"></div>
<div class="b" style="left:296.3px;top:23.0px;width:673.5px;height:35.0px;background:#bcbcbc;border-radius:5px 5px 0 0"></div>
<div class="b" style="left:975.0px;top:23.0px;width:673.8px;height:35.0px;background:#f2f2f2;border-radius:5px 5px 0 0"></div>
<div class="b" style="left:1654.0px;top:23.0px;width:34.8px;height:35.0px;background:#bababa;border-radius:5px 5px 0 0"></div>
<div class="b" style="left:0.0px;top:58.0px;width:1912.0px;height:102.0px;background:#f2f2f2"></div>
<div class="b" style="left:0.0px;top:160.0px;width:1912.0px;height:1.0px;background:#c6c6c6"></div>
<div class="b" style="left:0.0px;top:161.0px;width:1912.0px;height:2.5px;background:#efefef"></div>
<div class="t" style="left:29.3px;top:-6.0px;font-size:14.64px;color:#858585;">cubo Joaquín* (Lu Rodríguez) - Autodesk Fusion (Licencia educativa)</div>
<div class="t" style="left:601.5px;top:31.5px;font-size:15px;color:#5c5c5c;">laser cut 1*</div>
<div class="t" style="left:1269.6px;top:31.5px;font-size:15px;color:#333;">cubo Joaquín*</div>
<div class="b" style="left:1873.0px;top:22.4px;width:31.2px;height:31.2px;background:#f2f2f2;border-radius:50%"></div>
<div class="t" style="left:1879.2px;top:28.5px;font-size:13px;color:#333;">CR</div>
<div class="t" style="left:187.8px;top:62.5px;font-size:13.6px;color:#1a98dc;letter-spacing:0.08px;">SOLIDO</div>
<div class="t" style="left:297.9px;top:62.5px;font-size:13.6px;color:#3a3a3a;letter-spacing:0.08px;">SUPERFICIE</div>
<div class="t" style="left:438.8px;top:62.5px;font-size:13.6px;color:#3a3a3a;letter-spacing:0.08px;">MALLA</div>
<div class="t" style="left:542.9px;top:62.5px;font-size:13.6px;color:#3a3a3a;letter-spacing:0.08px;">CHAPA</div>
<div class="t" style="left:646.4px;top:62.5px;font-size:13.6px;color:#3a3a3a;letter-spacing:0.08px;">PLÁSTICO</div>
<div class="t" style="left:775.0px;top:62.5px;font-size:13.6px;color:#3a3a3a;letter-spacing:0.08px;">ADMINISTRAR</div>
<div class="t" style="left:929.0px;top:62.5px;font-size:13.6px;color:#3a3a3a;letter-spacing:0.08px;">UTILIDADES</div>
<div class="b" style="left:172.9px;top:83.5px;width:82.8px;height:3.5px;background:#0a94da"></div>
<div class="b" style="left:14.7px;top:71.0px;width:136.9px;height:75.7px;border:1px solid #cfcfcf;border-radius:6px;background:#f2f2f2"></div>
<div class="t" style="left:51.0px;top:98.5px;font-size:13.5px;color:#2b2b2b;font-weight:bold;">DISEÑO</div>
<div class="t" style="left:320.6px;top:137.5px;font-size:13.6px;color:#3a3a3a;letter-spacing:0.1px;">CREAR</div>
<div class="t" style="left:668.7px;top:137.5px;font-size:13.6px;color:#3a3a3a;letter-spacing:0.1px;">MODIFICAR</div>
<div class="t" style="left:947.5px;top:137.5px;font-size:13.6px;color:#3a3a3a;letter-spacing:0.1px;">ENSAMBLAR</div>
<div class="t" style="left:1129.8px;top:137.5px;font-size:13.6px;color:#3a3a3a;letter-spacing:0.1px;">CONFIGURAR</div>
<div class="t" style="left:1266.5px;top:137.5px;font-size:13.6px;color:#3a3a3a;letter-spacing:0.1px;">CONSTRUIR</div>
<div class="t" style="left:1396.2px;top:137.5px;font-size:13.6px;color:#3a3a3a;letter-spacing:0.1px;">INSPECCIONAR</div>
<div class="t" style="left:1547.3px;top:137.5px;font-size:13.6px;color:#3a3a3a;letter-spacing:0.1px;">INSERTAR</div>
<div class="t" style="left:1665.8px;top:137.5px;font-size:13.6px;color:#3a3a3a;letter-spacing:0.1px;">SELECCIONAR</div>
<div class="b" style="left:545.5px;top:91.3px;width:1.0px;height:63.3px;background:#d6d6d6"></div>
<div class="b" style="left:881.9px;top:91.3px;width:1.0px;height:63.3px;background:#d6d6d6"></div>
<div class="b" style="left:1111.0px;top:91.3px;width:1.0px;height:63.3px;background:#d6d6d6"></div>
<div class="b" style="left:1246.8px;top:91.3px;width:1.0px;height:63.3px;background:#d6d6d6"></div>
<div class="b" style="left:1377.0px;top:91.3px;width:1.0px;height:63.3px;background:#d6d6d6"></div>
<div class="b" style="left:1526.1px;top:91.3px;width:1.0px;height:63.3px;background:#d6d6d6"></div>
<div class="b" style="left:1647.0px;top:91.3px;width:1.0px;height:63.3px;background:#d6d6d6"></div>
<svg class="ov" width="1912" height="164" viewBox="0 0 1912 164">
<!-- app icon -->
<rect x="3.5" y="-8" width="17" height="21" rx="2" fill="#e8600f"/>
<rect x="3.5" y="6.5" width="17" height="6.5" rx="1.5" fill="#a3380a"/>
<rect x="9" y="-4" width="3" height="7" fill="#fff"/><rect x="9" y="-1" width="6" height="2.4" fill="#fff"/>
<text x="12" y="11.6" font-size="4" font-weight="bold" fill="#fff" text-anchor="middle" font-family="Liberation Sans, sans-serif">FUS</text>
<!-- window controls -->
<path d="M1765.5,2.5 H1777.5" stroke="#8a8a8a" stroke-width="1.1"/>
<path d="M1826.5,-0.5 V-3 H1835.5 V6 H1832.8" stroke="#8a8a8a" stroke-width="1.1" fill="none"/>
<rect x="1823.5" y="-0.5" width="9" height="9" rx="1.5" stroke="#8a8a8a" stroke-width="1.1" fill="none"/>
<path d="M1882,-3 L1893.6,9 M1893.6,-3 L1882,9" stroke="#7c7c7c" stroke-width="1.1"/>
<!-- grid -->
<g fill="#686868">
<rect x="11" y="29" width="5.1" height="5.1" rx="1.2"/><rect x="17.5" y="29" width="5.1" height="5.1"/><rect x="23.9" y="29" width="5.1" height="5.1" rx="1.2"/>
<rect x="11" y="35.45" width="5.1" height="5.1"/><rect x="17.5" y="35.45" width="5.1" height="5.1"/><rect x="23.9" y="35.45" width="5.1" height="5.1"/>
<rect x="11" y="41.9" width="5.1" height="5.1" rx="1.2"/><rect x="17.5" y="41.9" width="5.1" height="5.1"/><rect x="23.9" y="41.9" width="5.1" height="5.1" rx="1.2"/>
</g>
<!-- file -->
<path d="M54.4,28 H62.6 V34.4 H69.2 V46.4 a1.4 1.4 0 0 1 -1.4 1.4 H54.4 a1.4 1.4 0 0 1 -1.4 -1.4 V29.4 a1.4 1.4 0 0 1 1.4 -1.4 Z" fill="#686868"/>
<path d="M64,28.4 L69,33.2 H64 Z" fill="#686868"/>
<path d="M75.9,36 H85.1 L80.5,41.5 Z" fill="#686868"/>
<!-- save -->
<path d="M110.4,29 H124.7 a1.4 1.4 0 0 1 1.4 1.4 V45.5 a1.4 1.4 0 0 1 -1.4 1.4 H112.6 L109,43.3 V30.4 a1.4 1.4 0 0 1 1.4 -1.4 Z" fill="#686868"/>
<path d="M113.4,30 V36.3 H121.8 V30" stroke="#bbbbbb" stroke-width="1.4" fill="none"/>
<path d="M114.4,46.4 V41.6 H120.8 V46.4" stroke="#bbbbbb" stroke-width="1.4" fill="none"/>
<!-- undo -->
<path d="M157.2,31.4 L151.2,36.9 L157.2,42.4 M151.5,36.9 H158 C163,36.9 165.4,40 165.4,45.2" stroke="#686868" stroke-width="2.5" fill="none" stroke-linejoin="miter"/>
<path d="M175.1,36 H183.9 L179.5,41.3 Z" fill="#686868"/>
<!-- redo -->
<path d="M209,31.4 L215,36.9 L209,42.4 M214.7,36.9 H208 C203,36.9 200.5,40 200.5,45.2" stroke="#686868" stroke-width="2.5" fill="none"/>
<path d="M223.9,36 H232.7 L228.3,41.3 Z" fill="#686868"/>
<!-- home -->
<path d="M268.5,33.6 L278,43.3 H275.6 V50.6 H261.5 V43.3 H259.1 Z" fill="#787878"/>
<rect x="272.6" y="35.2" width="2.2" height="5" fill="#787878"/>
<rect x="267.4" y="45.6" width="2.7" height="5" fill="#bdbdbd"/>
<!-- cube icons on tabs -->
<g id="cubeA"><path d="M577.3,36.5 L586,32 L594.8,36.5 L586,41 Z" fill="#ffb066"/><path d="M577.3,36.5 L586,41 V51.5 L577.3,47 Z" fill="#ff8a2a"/><path d="M594.8,36.5 L586,41 V51.5 L594.8,47 Z" fill="#e86a0c"/><path d="M577.3,36.5 L586,32 L594.8,36.5 V47 L586,51.5 L577.3,47 Z" fill="none" stroke="#d9600a" stroke-width=".7" stroke-opacity=".7"/></g>
<use href="#cubeA" x="667.6" y="0"/>
<!-- close x -->
<path d="M951.2,35.4 L961.6,45.8 M961.6,35.4 L951.2,45.8" stroke="#6a6a6a" stroke-width="1.5"/>
<path d="M1629.4,35.4 L1640.6,45.8 M1640.6,35.4 L1629.4,45.8" stroke="#555" stroke-width="1.5"/>
<!-- plus -->
<path d="M1664.2,40.2 H1679.8 M1672,32.4 V48" stroke="#727272" stroke-width="3.1"/>
<!-- plug/extension -->
<circle cx="1713.7" cy="37.8" r="9.7" fill="#606060"/>
<g fill="#cdcdcd" stroke="none"><rect x="1708.8" y="35" width="9.4" height="7.4" rx="2.2" transform="rotate(-45 1713.5 38.7)"/>
<rect x="1716.2" y="30.4" width="1.9" height="5" rx=".9" transform="rotate(45 1717.1 32.9)"/><rect x="1719.4" y="33.6" width="1.9" height="5" rx=".9" transform="rotate(45 1720.3 36.1)"/></g>
<path d="M1710.2,42 Q1707,44.4 1709.6,45.6 Q1714.5,47.4 1719.8,44.6" stroke="#cdcdcd" stroke-width="1.8" fill="none" stroke-linecap="round"/>
<!-- clock -->
<circle cx="1754.9" cy="37.8" r="9.6" fill="none" stroke="#606060" stroke-width="1.2"/>
<circle cx="1754.9" cy="37.8" r="7.6" fill="#606060"/>
<path d="M1754.9,32.5 V38.3 H1759.5" stroke="#cccccc" stroke-width="1.4" fill="none"/>
<!-- bell -->
<path d="M1796,28 a1.6 1.6 0 0 1 1.6 1.6 c3.2,0.9 4.6,3.8 4.6,7.2 c0,3.6 0.9,5 2.3,6.4 H1787.5 c1.4,-1.4 2.3,-2.8 2.3,-6.4 c0,-3.4 1.4,-6.3 4.6,-7.2 a1.6 1.6 0 0 1 1.6 -1.6 Z" fill="#606060"/>
<path d="M1793.4,45 a2.6 2.6 0 0 0 5.2 0 Z" fill="#606060"/>
<!-- help -->
<circle cx="1837.4" cy="37.8" r="9.8" fill="#606060"/>
<text x="1837.4" y="43.9" font-size="17" font-weight="bold" fill="#cccccc" text-anchor="middle" font-family="Liberation Sans, sans-serif">?</text>
<!-- sketch -->
<g stroke="#6b6b6b" stroke-width="1.1" fill="none">
<path d="M175.5,93.6 H205 M173.1,96 V125 M207.1,96 V113.8 M175.5,127.2 H193.2"/>
<path d="M184.5,102.3 H195.6 M182,104.8 V116.4 M198,104.7 C197.5,112 192,117.8 184.4,118.8"/>
</g>
<g fill="#6b6b6b"><rect x="171.3" y="91.8" width="3.7" height="3.7"/><rect x="205.3" y="91.8" width="3.7" height="3.7"/><rect x="171.3" y="125.3" width="3.7" height="3.7"/>
<rect x="180.2" y="100.4" width="3.7" height="3.7"/><rect x="196.2" y="100.4" width="3.7" height="3.7"/><rect x="180.2" y="116.9" width="3.7" height="3.7"/></g>
<path d="M194.1,120.6 H200 V114.1 H205.1 V120.6 H211 V125.5 H205.1 V131.8 H200 V125.5 H194.1 Z" fill="#22a84b"/>
<!-- extrude -->
<path d="M226.2,124.7 H249.2 V131.5 H226.2 Z" fill="#b6b6b6"/><path d="M249.2,124.7 L256,118.5 V125.3 L249.2,131.5 Z" fill="#a2a2a2"/>
<path d="M226.2,99.1 H249.2 V124.7 H226.2 Z" fill="#6aaee3"/><path d="M226.2,99.1 L233.5,91.8 H256 L249.2,99.1 Z" fill="#8bc8f7"/><path d="M249.2,99.1 L256,91.8 V118.5 L249.2,124.7 Z" fill="#4a92cd"/>
<path d="M260.5,124 V97" stroke="#222" stroke-width="1.2"/><path d="M260.5,92.6 L257.4,98.8 H263.6 Z" fill="#222"/>
<!-- revolve -->
<path d="M279,108.8 Q298.6,92.5 318.6,108.5 L311.4,115.3 Q298.9,105 286.3,115.5 Z" fill="#8bc8f7"/>
<path d="M286.3,115.5 Q298.9,105 311.4,115.3 L310.9,127.4 Q298.9,118 286.3,127.7 Z" fill="#6aaee3"/>
<path d="M279,108.8 L286.3,115.5 V127.7 L279,120.6 Z" fill="#4a92cd"/>
<path d="M318.6,108.5 L311.4,115.3 L311.2,127.4 L318.6,120.4 Z" fill="#fff" stroke="#555" stroke-width="1.3" stroke-linejoin="round"/>
<path d="M315.6,100.8 Q298,87 281.5,99.6" stroke="#333" stroke-width="1.2" fill="none"/><path d="M279.3,101.8 L285.3,100.6 L281.8,96.4 Z" fill="#333"/>
<!-- hole -->
<path d="M333.3,100 L340.5,92.5 H372.4 L365.3,100 Z" fill="#eaeaea"/><path d="M365.3,100 L372.4,92.5 V124.7 L365.3,131.6 Z" fill="#bdbdbd"/><path d="M333.3,100 H365.3 V131.6 H333.3 Z" fill="#dcdcdc"/>
<path d="M333.3,100 L340.5,92.5 H372.4 V124.7 L365.3,131.6 H333.3 Z M333.3,100 H365.3 V131.6 M365.3,100 L372.4,92.5" fill="none" stroke="#7a7a7a" stroke-width="1"/>
<circle cx="349.7" cy="115.1" r="10.2" fill="#fff" stroke="#6a6a6a" stroke-width="1.1"/>
<clipPath id="hc"><circle cx="349.7" cy="115.1" r="8.1"/></clipPath>
<circle cx="349.7" cy="115.1" r="8.1" fill="#6aaee3"/><circle cx="353.3" cy="111.6" r="5.6" fill="#fff" clip-path="url(#hc)"/>
<!-- rect pattern -->
<path d="M396,98.6 H411.5 M390.5,104 V119.6 M396,124.9 H411.5" stroke="#666" stroke-width="1.2"/>
<rect x="386.8" y="94.9" width="7.5" height="7.5" fill="#f6f6f6" stroke="#6a6a6a" stroke-width="1"/>
<rect x="412.5" y="94.4" width="8.5" height="8.5" fill="#6aaee3"/><rect x="386.3" y="120.7" width="8.5" height="8.5" fill="#6aaee3"/><rect x="412.5" y="120.7" width="8.5" height="8.5" fill="#6aaee3"/>
<!-- form -->
<path d="M444.5,99 Q446,93.8 452,93.6 H464.5 Q470.5,94 472.5,97.5 L477.6,106 V121 Q477.4,124 474.5,126.4 L468.5,131 L441,106 Z" fill="#c4a6f1"/>
<path d="M469,107 L477.6,104.5 V121.2 Q477.4,124 474.6,126.2 L469,130.6 Z" fill="#8a62c9"/>
<rect x="440.4" y="103" width="28.8" height="28.6" rx="7.5" fill="#d6c2f7"/>
<rect x="442.2" y="105" width="25.2" height="24.8" rx="5.5" fill="#ad85e7"/>
<path d="M453.3,94 V131.4 M440.8,116.3 Q454,119.5 469,116.3" stroke="#8a5fc9" stroke-width="1" fill="none"/>
<path d="M469.4,91.8 L471.3,98 L476.6,94.6 L474.1,100.4 L480.4,102.3 L474.1,104.2 L476.6,110 L471.3,106.6 L469.4,112.8 L467.5,106.6 L462.2,110 L464.7,104.2 L458.4,102.3 L464.7,100.4 L462.2,94.6 L467.5,98 Z" fill="#f5a400"/>
<!-- generative -->
<path d="M495.5,97.5 C503,98.6 508,103 512.5,103.4 C517,103 523,100 529,97.6 L531.4,102.6 C522,106 516.6,112 514.8,119.4 L508,119.4 C506.4,111 502,104.6 494.4,101.6 Z" fill="#4f9bd5"/>
<path d="M507.4,107.8 L517,107.2 L511.7,116.6 Z" fill="#f2f2f2"/>
<circle cx="511.4" cy="124.8" r="6.6" fill="#4f9bd5"/><circle cx="511.4" cy="124.8" r="4.4" fill="#f6f6f6" stroke="#6a6a6a" stroke-width="1"/><circle cx="511.4" cy="124.8" r="1.7" fill="#f6f6f6" stroke="#6a6a6a" stroke-width="1.1"/>
<rect x="494.2" y="92.6" width="7.6" height="7.6" fill="#f8f8f8" stroke="#6a6a6a" stroke-width="1.1"/>
<rect x="524.4" y="96" width="7.6" height="7.6" fill="#f8f8f8" stroke="#6a6a6a" stroke-width="1.1" transform="rotate(-32 528.2 99.8)"/>
<!-- press pull -->
<path d="M562.3,99.4 L569.7,92.1 H577 L571,99.4 Z" fill="#f0f0f0"/><path d="M562.3,99.4 H571.2 V131.6 H562.3 Z" fill="#dcdcdc"/>
<path d="M571,131.6 H562.3 V99.4 L569.7,92.1 H577" fill="none" stroke="#6a6a6a" stroke-width="1.1"/>
<path d="M571.2,99.4 H582.7 V131.6 H571.2 Z" fill="#6aaee3"/><path d="M571.2,99.4 L578.4,92.1 H589.9 L582.7,99.4 Z" fill="#8bc8f7"/><path d="M582.7,99.4 L589.9,92.1 V124.5 L582.7,131.6 Z" fill="#4a92cd"/>
<path d="M586.6,108.6 H594 V113.8 H586.6 Z" fill="#f2f2f2"/><path d="M587.4,111.2 H595" stroke="#222" stroke-width="1.2"/><path d="M599,111.2 L593.4,108 V114.4 Z" fill="#222"/>
<!-- fillet -->
<path d="M615.2,102.3 L623.6,92.1 H637 Q651,94 654.9,108.6 V122 L645.1,131.6 H615.2 Z" fill="#dcdcdc"/>
<path d="M615.2,102.3 L623.6,92.1 H637 L630.2,100 Z" fill="#ececec"/>
<path d="M645.1,117.2 L654.9,108.6 V122 L645.1,131.6 Z" fill="#bdbdbd"/>
<path d="M630.2,100 L637,92.1 Q651,94 654.9,108.6 L645.1,117.2 Q642.6,103.4 630.2,100 Z" fill="#6aaee3"/>
<path d="M637,92.1 H623.6 L615.2,102.3 V131.6 H645.1 L654.9,122 V108.6" fill="none" stroke="#6a6a6a" stroke-width="1.1"/>
<!-- shell -->
<path d="M668.7,100 L677.5,92.1 H709 L699.2,100 Z" fill="#ededed"/><path d="M699.2,100 L709,92.1 V122.5 L699.2,131.6 Z" fill="#bdbdbd"/><path d="M668.7,100 H699.2 V131.6 H668.7 Z" fill="#dcdcdc"/>
<path d="M668.7,100 L677.5,92.1 H709 V122.5 L699.2,131.6 H668.7 Z M668.7,100 H699.2 V131.6 M699.2,100 L709,92.1" fill="none" stroke="#6a6a6a" stroke-width="1.1"/>
<rect x="671.8" y="104.6" width="23.4" height="23" fill="#f4f4f4"/>
<path d="M673.9,106.9 H683.7 V117.2 L673.9,126.4 Z" fill="#4a92cd"/><path d="M683.7,117.2 H694 V126.4 H673.9 Z" fill="#8bc8f7"/>
<!-- combine -->
<path d="M735.5,96.5 L740.6,92.1 H762.5 L757.3,96.5 Z" fill="#8bc8f7"/><path d="M757.3,96.5 L762.5,92.1 V114 L757.3,119 Z" fill="#4a92cd"/><path d="M735.5,96.5 H757.3 V119 H735.5 Z" fill="#6aaee3"/>
<path d="M722.8,109.2 L728,104.6 H736 V109.2 Z" fill="#8bc8f7"/><path d="M722.8,109.2 H745.2 V131.6 H722.8 Z" fill="#6aaee3"/><path d="M745.2,119 H750.4 L745.2,131.6 Z" fill="#4a92cd"/><path d="M745.2,119 H750.4 V126.6 L745.2,131.6 Z" fill="#4a92cd"/>
<!-- split body -->
<path d="M778.8,118.4 H805.9 V129.9 H778.8 Z" fill="#dcdcdc"/><path d="M805.9,118.4 L814,110.5 V122 L805.9,129.9 Z" fill="#bdbdbd"/>
<path d="M778.8,118.4 V129.9 H805.9 L814,122 V111" fill="none" stroke="#777" stroke-width="1"/>
<path d="M778.8,99.4 H805.9 V112 H778.8 Z" fill="#6aaee3"/><path d="M778.8,99.4 L786,92 H814 L805.9,99.4 Z" fill="#8bc8f7"/><path d="M805.9,99.4 L814,92 V104 L805.9,112 Z" fill="#4a92cd"/>
<path d="M775.9,115.1 H807 L816.2,105.1" stroke="#2a90e0" stroke-width="1.3" fill="none"/>
<!-- move -->
<path d="M849.9,95 V128 M834,111.7 H866" stroke="#333" stroke-width="2.6"/>
<path d="M849.9,91.6 L856,101.6 H843.8 Z M849.9,131.4 L856,121.6 H843.8 Z M830.2,111.7 L840,105.6 V117.8 Z M869.8,111.7 L860,105.6 V117.8 Z" fill="#333"/>
<!-- insert derive -->
<path d="M903,107.4 L911.5,97 H934.5 L924.9,107.4 Z" fill="#eeeeee"/><path d="M924.9,107.4 L934.5,97 V118.5 L924.9,128.5 Z" fill="#c2c2c2"/><path d="M903,107.4 H924.9 V128.5 H903 Z" fill="#dcdcdc"/>
<path d="M903,104 V128.5 H916 M921,97 H934.5 V113" fill="none" stroke="#8a8a8a" stroke-width="1"/>
<path d="M897.3,97.4 H908 V92.1 L919.4,99.6 L908,107 V102 H897.3 Z" fill="#1a8be0"/>
<g fill="none" stroke="#333" stroke-width="2.3"><rect x="918.6" y="119.6" width="11.5" height="6.6" rx="3.3" transform="rotate(-32 924.3 122.9)"/><rect x="925.2" y="115.4" width="11.5" height="6.6" rx="3.3" transform="rotate(-32 931 118.7)"/></g>
<!-- new component -->
<path d="M951.5,116.6 H966.5 V131 H951.5 Z" fill="#dcdcdc"/><path d="M967.6,116.6 H980.9 V131 H967.6 Z" fill="#dedede"/><path d="M967.6,116.6 L972,112 H986 L980.9,116.6 Z" fill="#efefef"/><path d="M980.9,116.6 L986,112 V126 L980.9,131 Z" fill="#bdbdbd"/>
<path d="M951.5,116.6 V131 H980.9 L986,126 V112 H972 M967,116.6 V131 M967,116.6 H980.9 V131 M980.9,116.6 L986,112" fill="none" stroke="#777" stroke-width="1"/>
<path d="M951.5,102 H966.5 V116.6 H951.5 Z" fill="#6aaee3"/><path d="M951.5,102 L957,97 H971 L966.5,102 Z" fill="#8bc8f7"/><path d="M966.5,102 L971,97 V110 L966.5,116.6 Z" fill="#4a92cd"/>
<path d="M980.3,91.8 L982.2,98 L987.5,94.6 L985,100.4 L991.3,102.3 L985,104.2 L987.5,110 L982.2,106.6 L980.3,112.8 L978.4,106.6 L973.1,110 L975.6,104.2 L969.3,102.3 L975.6,100.4 L973.1,94.6 L978.4,98 Z" fill="#f5a400"/>
<!-- joint -->
<rect x="1005.6" y="115.3" width="16.8" height="13.6" fill="#f4f4f4" stroke="#777" stroke-width="1.3"/>
<rect x="1026" y="94.2" width="17.9" height="15.3" fill="#6aaee3"/>
<path d="M1024.6,94.4 V129.6" stroke="#d9282f" stroke-width="1.3"/>
<!-- BOM -->
<rect x="1059.1" y="92.1" width="8.1" height="7.3" fill="#6aaee3"/>
<path d="M1059.6,99.9 H1067.2 V107 H1059.6 Z M1067.2,99.9 H1074.2 V107 H1067.2 Z" fill="#f6f6f6" stroke="#6a6a6a" stroke-width="1"/>
<path d="M1065.4,107.4 V128.7 M1065.4,113.2 H1074.6 M1065.4,119.5 H1074.6 M1065.4,125.9 H1074.6" stroke="#9a9a9a" stroke-width="1" fill="none"/>
<rect x="1077.9" y="102.7" width="20.5" height="28.5" fill="#fff" stroke="#666" stroke-width="1.2"/>
<rect x="1077.5" y="102.3" width="21.3" height="4.4" fill="#666"/><rect x="1079.2" y="103.6" width="1.6" height="1.6" fill="#ddd"/>
<path d="M1084.4,106.7 V131.2 M1078,112.6 H1098.4 M1078,118.8 H1098.4 M1078,125 H1098.4" stroke="#666" stroke-width="1.1" fill="none"/>
<!-- configure cube -->
<path d="M1134,101.2 L1143.2,92.1 H1168.6 L1160.1,101.2 Z" fill="#efefef"/><path d="M1160.1,101.2 L1168.6,92.1 V118.9 L1160.1,126.7 Z" fill="#c2c2c2"/><path d="M1134,101.2 H1160.1 V126.7 H1134 Z" fill="#dcdcdc"/>
<path d="M1134,101.2 L1143.2,92.1 H1168.6 V117 M1134,101.2 V126.7 H1156" fill="none" stroke="#a8a8a8" stroke-width="1"/>
<rect x="1154.6" y="116" width="21" height="16.4" fill="#f2f2f2"/><g id="sld"><path d="M1155.9,120.3 H1174.3 M1155.9,127.8 H1174.3 M1168.6,124.4 V131.6" stroke="#666" stroke-width="2.2" fill="none"/><rect x="1160.1" y="116.8" width="2.5" height="7" fill="#1a8be0"/></g>
<!-- configure table -->
<rect x="1188" y="92.6" width="36.6" height="34.4" fill="#fff" stroke="#666" stroke-width="1.2"/><rect x="1187.4" y="92" width="37.8" height="6.4" fill="#666"/><rect x="1190.2" y="94" width="4.4" height="2.6" fill="#e8e8e8"/>
<rect x="1191.9" y="103.4" width="28.8" height="19.4" fill="#fff" stroke="#666" stroke-width="1.2"/>
<path d="M1197.8,103.4 V122.8 M1204,103.4 V122.8 M1191.9,109.8 H1220.7 M1191.9,116.2 H1220.7" stroke="#666" stroke-width="1.1" fill="none"/>
<rect x="1208.4" y="115.6" width="21" height="16.8" fill="#f2f2f2"/>
<use href="#sld" x="53.7" y="0"/>
<!-- construct -->
<path d="M1295.3,102.7 L1305,92.3 H1315 L1305.6,102.7 Z" fill="#f8f8f8"/><path d="M1295.3,102.7 H1305.6 V130.2 H1295.3 Z" fill="#dcdcdc"/>
<path d="M1305.6,130.2 H1295.3 V102.7 L1305,92.3 H1315" fill="none" stroke="#666" stroke-width="1.1"/>
<path d="M1305.6,102.7 L1317.6,92.3 V119.6 L1305.6,130.2 Z" fill="#5bc47c"/>
<path d="M1321.2,103.4 L1332.9,92.3 V118.6 L1321.2,129.9 Z" fill="#e89a5c"/>
<!-- measure -->
<rect x="1435" y="114" width="34.9" height="7.7" fill="#f5a400"/>
<path d="M1438.9,114 V116.4 M1442.8,114 V117.4 M1446.7,114 V116.4 M1450.6,114 V117.4 M1454.5,114 V116.4 M1458.4,114 V117.4 M1462.3,114 V116.4 M1466.2,114 V117.4" stroke="#7a5a10" stroke-width="1"/>
<path d="M1435.4,102 V112.5 M1469.6,102 V112.5 M1438,107.3 H1467" stroke="#555" stroke-width="1.1" fill="none"/>
<path d="M1436.4,107.3 L1440.6,104.8 V109.8 Z M1468.6,107.3 L1464.4,104.8 V109.8 Z" fill="#555"/>
<!-- bolt -->
<path d="M1550.1,102.7 H1567.1 V130 Q1558.6,133 1550.1,130 Z" fill="#7bb9ec"/>
<path d="M1550.1,105.5 L1567.1,104.5 M1550.1,108 L1567.1,107 M1550.1,110.5 L1567.1,109.5 M1550.1,113 L1567.1,112 M1550.1,115.5 L1567.1,114.5 M1550.1,118 L1567.1,117 M1550.1,120.5 L1567.1,119.5 M1550.1,123 L1567.1,122 M1550.1,125.5 L1567.1,124.5 M1550.1,128 L1567.1,127" stroke="#5a9cd8" stroke-width="1"/>
<path d="M1545,93.4 H1573 L1574.2,95 V102.7 H1543.8 V95 Z" fill="#6aaee3"/><path d="M1545,93.4 H1573 L1574.2,95 H1543.8 Z" fill="#8bc8f7"/><path d="M1566.4,95 H1574.2 V102.7 H1566.4 Z" fill="#4a92cd"/><path d="M1543.8,95 H1551 V102.7 H1543.8 Z" fill="#7fbef0"/>
<path d="M1564.3,120.3 H1569.9 V114.4 H1575.3 V120.3 H1581.2 V126 H1575.3 V131.6 H1569.9 V126 H1564.3 Z" fill="#22a84b"/>
<!-- image -->
<rect x="1596.5" y="93.7" width="35.8" height="34.6" fill="#8bc8f7" stroke="#4a92cd" stroke-width="1"/>
<path d="M1597,117 Q1604,105 1610,108.5 Q1616,113 1619.5,119.5 Q1624,112.5 1628,116 L1632,121 V127.9 H1597 Z" fill="#3f8fcb"/>
<circle cx="1622.2" cy="103.1" r="3.7" fill="#ffffc4"/>
<!-- select -->
<rect x="1700.9" y="92.6" width="33.6" height="26" fill="none" stroke="#22b14c" stroke-width="1.4" stroke-dasharray="4.6 2.6"/>
<path d="M1726.4,110 V128.4 L1730.4,124.8 L1733.4,131.4 L1736.4,130 L1733.5,123.6 H1739 Z" fill="#fff" stroke="#333" stroke-width="1.3" stroke-linejoin="round"/>
<path d="M373.3,144.3 h6.6 l-3.3,4.6 Z" fill="#333"/><path d="M749.3,144.3 h6.6 l-3.3,4.6 Z" fill="#333"/><path d="M1035.5,144.3 h6.6 l-3.3,4.6 Z" fill="#333"/><path d="M1225.0,144.3 h6.6 l-3.3,4.6 Z" fill="#333"/><path d="M1351.5,144.3 h6.6 l-3.3,4.6 Z" fill="#333"/><path d="M1504.2,144.3 h6.6 l-3.3,4.6 Z" fill="#333"/><path d="M1619.4,144.3 h6.6 l-3.3,4.6 Z" fill="#333"/><path d="M1768.0,144.3 h6.6 l-3.3,4.6 Z" fill="#333"/><path d="M111.3,107 h6.8 l-3.4,4.8 Z" fill="#333"/>
</svg>
<div class="b" style="left:5.0px;top:169.3px;width:373.6px;height:30.1px;background:#f2f2f2;border:1px solid #c4c4c4;box-shadow:0 1px 1px rgba(0,0,0,.08)"></div>
<div class="t" style="left:36.4px;top:174.5px;font-size:13.6px;color:#5a5a5a;letter-spacing:0.18px;">NAVEGADOR</div>
<div class="b" style="left:50.1px;top:206.8px;width:168.3px;height:23.9px;background:rgba(240,240,240,.93)"></div>
<div class="b" style="left:72.7px;top:237.0px;width:231.8px;height:24.0px;background:rgba(240,240,240,.93)"></div>
<div class="b" style="left:72.7px;top:267.3px;width:162.0px;height:23.9px;background:rgba(240,240,240,.93)"></div>
<div class="b" style="left:72.6px;top:296.8px;width:128.5px;height:24.2px;background:rgba(240,240,240,.93)"></div>
<div class="b" style="left:72.6px;top:326.7px;width:163.2px;height:24.0px;background:rgba(240,240,240,.93)"></div>
<div class="b" style="left:72.6px;top:356.6px;width:219.6px;height:25.1px;background:rgba(240,240,240,.93)"></div>
<div class="b" style="left:103.9px;top:358.9px;width:157.1px;height:19.9px;background:#8e8e8e"></div>
<div class="t" style="left:122.5px;top:209.5px;font-size:13.6px;color:#2e2e2e;letter-spacing:0.12px;">cubo Joaquín</div>
<div class="t" style="left:113.7px;top:239.5px;font-size:13.6px;color:#2e2e2e;letter-spacing:0.12px;">Configuración del documento</div>
<div class="t" style="left:113.7px;top:269.5px;font-size:13.6px;color:#2e2e2e;letter-spacing:0.12px;">Vistas guardadas</div>
<div class="t" style="left:145.4px;top:299.5px;font-size:13.6px;color:#2e2e2e;letter-spacing:0.12px;">Origen</div>
<div class="t" style="left:145.4px;top:329.5px;font-size:13.6px;color:#2e2e2e;letter-spacing:0.12px;">Construcción</div>
<div class="t" style="left:145.8px;top:359.5px;font-size:13.5px;color:#fff;font-weight:bold;">Componente1:1</div>
<div class="b" style="left:1603.0px;top:289.0px;width:310.0px;height:340.0px;background:#f2f2f2;border:1px solid #bdbdbd;border-bottom:1.5px solid #b4b4b4"></div>
<div class="b" style="left:1604.5px;top:318.2px;width:307.5px;height:1.0px;background:#c8c8c8"></div>
<div class="b" style="left:1604.5px;top:584.0px;width:307.5px;height:1.0px;background:#cfcfcf"></div>
<div class="t" style="left:1634.7px;top:294.5px;font-size:13.8px;color:#555;">PATRÓN CIRCULAR</div>
<div class="t" style="left:1619.8px;top:329.5px;font-size:13.5px;color:#222;">Tipo</div>
<div class="t" style="left:1619.8px;top:366.5px;font-size:13.5px;color:#222;">Tipo de objeto</div>
<div class="t" style="left:1619.8px;top:404.5px;font-size:13.5px;color:#222;">Objetos</div>
<div class="t" style="left:1619.8px;top:441.5px;font-size:13.5px;color:#222;">Eje</div>
<div class="t" style="left:1619.8px;top:479.5px;font-size:13.5px;color:#222;">Distribución</div>
<div class="t" style="left:1619.8px;top:516.5px;font-size:13.5px;color:#222;">Desactivación</div>
<div class="t" style="left:1619.8px;top:554.5px;font-size:13.5px;color:#222;">Cantidad</div>
<div class="b" style="left:1757.3px;top:322.0px;width:26.5px;height:34.0px;background:#0696d7"></div>
<div class="b" style="left:1724.0px;top:360.3px;width:150.7px;height:32.4px;background:#fff;border:1px solid #c6c6c6"></div>
<div class="b" style="left:1724.0px;top:397.3px;width:114.4px;height:33.0px;background:#fff;border:1px solid #c6c6c6"></div>
<div class="b" style="left:1723.7px;top:434.6px;width:114.9px;height:33.8px;background:#0696d7"></div>
<div class="b" style="left:1723.7px;top:472.2px;width:151.0px;height:33.3px;background:#fff;border:1px solid #c6c6c6"></div>
<div class="b" style="left:1723.7px;top:548.5px;width:150.1px;height:31.2px;background:#fff;border:1px solid #c6c6c6"></div>
<div class="b" style="left:1857.4px;top:549.5px;width:15.4px;height:29.2px;background:#e9e9e9;border-left:1px solid #d2d2d2"></div>
<div class="b" style="left:1857.4px;top:563.6px;width:15.4px;height:1.0px;background:#d2d2d2"></div>
<div class="t" style="left:1753.2px;top:366.5px;font-size:13.5px;color:#222;">Cuerpos</div>
<div class="t" style="left:1751.8px;top:404.5px;font-size:13.5px;color:#222;">1 seleccion...</div>
<div class="t" style="left:1751.8px;top:441.5px;font-size:13.5px;color:#fff;">1 seleccion...</div>
<div class="t" style="left:1753.0px;top:479.5px;font-size:13.5px;color:#222;">Completa</div>
<div class="t" style="left:1728.4px;top:554.5px;font-size:13.5px;color:#222;">4</div>
<div class="b" style="left:1738.3px;top:594.4px;width:74.4px;height:24.9px;background:#e6e6e6;border:1px solid #bcbcbc"></div>
<div class="b" style="left:1826.2px;top:594.4px;width:74.0px;height:24.9px;background:#e6e6e6;border:1px solid #bcbcbc"></div>
<div class="t" style="left:1749.9px;top:597.0px;font-size:14.8px;color:#444;">Aceptar</div>
<div class="t" style="left:1833.4px;top:597.0px;font-size:14.8px;color:#444;">Cancelar</div>
<div class="b" style="left:1099.9px;top:590.2px;width:104.8px;height:27.4px;background:#f4f4f4;border:1px solid #d4d4d4;border-top-color:#cfcfcf"></div>
<div class="b" style="left:1118.2px;top:591.2px;width:70.1px;height:25.4px;background:#fff;border-left:1px solid #c8c8c8"></div>
<div class="b" style="left:1188.3px;top:591.2px;width:15.4px;height:25.4px;background:#e6e6e6"></div>
<div class="b" style="left:1188.3px;top:603.0px;width:15.4px;height:1.0px;background:#cfcfcf"></div>
<div class="b" style="left:1113.0px;top:591.5px;width:1.2px;height:25.0px;background:#dadada"></div>
<div class="b" style="left:1121.0px;top:595.9px;width:7.8px;height:17.0px;background:#9a3c06"></div>
<div class="b" style="left:1128.8px;top:595.9px;width:0.8px;height:17.0px;background:#55c8ff"></div>
<div class="t" style="left:1121.2px;top:594.5px;font-size:13.5px;color:#fff;">4</div>
<div class="b" style="left:1212.6px;top:590.2px;width:44.5px;height:27.4px;background:#f2f2f2"></div>
<svg class="ov" width="1912" height="996" viewBox="0 0 1912 996">
<path d="M17.6,181.5 V188.5 L11.4,185 Z M24.4,181.5 V188.5 L18.2,185 Z" fill="#222"/>
<circle cx="359.5" cy="184.4" r="5.8" fill="#222"/><rect x="356" y="183.5" width="7" height="1.8" fill="#f2f2f2"/>
<defs><linearGradient id="tg" x1="0" y1="0" x2="1" y2="1"><stop offset="0" stop-color="#888"/><stop offset=".6" stop-color="#111"/></linearGradient></defs>
<path d="M37,214.7 V223 H28 Z" fill="url(#tg)"/>
<path d="M51.6,243.5 L58.8,249.0 L51.6,254.5 Z" fill="#fff" stroke="#1a1a1a" stroke-width="1.2" stroke-linejoin="round"/>
<path d="M51.6,273.7 L58.8,279.2 L51.6,284.7 Z" fill="#fff" stroke="#1a1a1a" stroke-width="1.2" stroke-linejoin="round"/>
<path d="M51.6,303.5 L58.8,309.0 L51.6,314.5 Z" fill="#fff" stroke="#1a1a1a" stroke-width="1.2" stroke-linejoin="round"/>
<path d="M51.6,333.5 L58.8,339.0 L51.6,344.5 Z" fill="#fff" stroke="#1a1a1a" stroke-width="1.2" stroke-linejoin="round"/>
<path d="M51.6,363.5 L58.8,369.0 L51.6,374.5 Z" fill="#fff" stroke="#1a1a1a" stroke-width="1.2" stroke-linejoin="round"/>
<path d="M53.9,219.0 Q63.8,207.5 73.7,219.0 Q63.8,230.5 53.9,219.0 Z" fill="#9b9b9b"/><circle cx="63.8" cy="219.0" r="3.6" fill="none" stroke="#f4f4f4" stroke-width="1.5"/>
<path d="M76.3,339.0 Q86.2,327.5 96.1,339.0 Q86.2,350.5 76.3,339.0 Z" fill="#9b9b9b"/><circle cx="86.2" cy="339.0" r="3.6" fill="none" stroke="#f4f4f4" stroke-width="1.5"/>
<path d="M76.3,369.0 Q86.2,357.5 96.1,369.0 Q86.2,380.5 76.3,369.0 Z" fill="#9b9b9b"/><circle cx="86.2" cy="369.0" r="3.6" fill="none" stroke="#f4f4f4" stroke-width="1.5"/>
<path d="M76.6,309 Q86.2,298.5 95.8,309 Q86.2,319.5 76.6,309 Z" fill="none" stroke="#9b9b9b" stroke-width="1.2"/><circle cx="86.2" cy="309" r="3.4" fill="none" stroke="#9b9b9b" stroke-width="1.1"/><path d="M79.5,302.5 L92.8,315.6" stroke="#9b9b9b" stroke-width="1.3"/>
<path d="M86,213.5 L90,209.4 H96.2 L96.2,218.5 L100,216.4 H103.8 V223.6 L100.6,227 H86 Z" fill="#dfe3ea" stroke="#7a7a7a" stroke-width="1" stroke-linejoin="round"/><path d="M86,213.5 H92.8 V227 M92.8,213.5 L96.2,209.6 M92.8,220 H100.4 V227 M100.4,220 L103.8,216.6 M86,220 H92.8" fill="none" stroke="#8a8f98" stroke-width=".9"/>
<path d="M94.9,246.5 L94.9,250.3 L92.1,250.6 L91.8,251.4 L93.5,253.6 L90.8,256.3 L88.6,254.6 L87.8,254.9 L87.5,257.7 L83.7,257.7 L83.4,254.9 L82.6,254.6 L80.4,256.3 L77.7,253.6 L79.4,251.4 L79.1,250.6 L76.3,250.3 L76.3,246.5 L79.1,246.2 L79.4,245.4 L77.7,243.2 L80.4,240.5 L82.6,242.2 L83.4,241.9 L83.7,239.1 L87.5,239.1 L87.8,241.9 L88.6,242.2 L90.8,240.5 L93.5,243.2 L91.8,245.4 L92.1,246.2 Z" fill="#878787"/><circle cx="85.6" cy="248.4" r="3.3" fill="#f0f0f0"/>
<path d="M76.3,271.4 h8.2 l1.6,1.8 h-9.8 Z M76.3,274.0 h9.8 l1.8,-2.4 h8.2 v15.4 h-19.8 Z" fill="#9a9a9a"/>
<path d="M107.4,301.2 h8.2 l1.6,1.8 h-9.8 Z M107.4,303.8 h9.8 l1.8,-2.4 h8.2 v15.4 h-19.8 Z" fill="#9a9a9a"/>
<path d="M107.4,331.2 h8.2 l1.6,1.8 h-9.8 Z M107.4,333.8 h9.8 l1.8,-2.4 h8.2 v15.4 h-19.8 Z" fill="#9a9a9a"/>
<path d="M103.4,318.7 l2.6,-2.8 M108.7,318.7 l2.6,-2.8 M114.0,318.7 l2.6,-2.8 M119.3,318.7 l2.6,-2.8 M124.6,318.7 l2.6,-2.8 M129.9,318.7 l2.6,-2.8 M135.2,318.7 l2.6,-2.8 M140.5,318.7 l2.6,-2.8 M145.8,318.7 l2.6,-2.8 M151.1,318.7 l2.6,-2.8 M156.4,318.7 l2.6,-2.8 M161.7,318.7 l2.6,-2.8 M167.0,318.7 l2.6,-2.8 M172.3,318.7 l2.6,-2.8 M177.6,318.7 l2.6,-2.8 M182.9,318.7 l2.6,-2.8 M188.2,318.7 l2.6,-2.8 M193.5,318.7 l2.6,-2.8" stroke="#6b84b0" stroke-width="2" fill="none"/>
<path d="M104.2,378.6 l2.6,-2.8 M109.5,378.6 l2.6,-2.8 M114.8,378.6 l2.6,-2.8 M120.1,378.6 l2.6,-2.8 M125.4,378.6 l2.6,-2.8 M130.7,378.6 l2.6,-2.8 M136.0,378.6 l2.6,-2.8 M141.3,378.6 l2.6,-2.8 M146.6,378.6 l2.6,-2.8 M151.9,378.6 l2.6,-2.8 M157.2,378.6 l2.6,-2.8 M162.5,378.6 l2.6,-2.8 M167.8,378.6 l2.6,-2.8 M173.1,378.6 l2.6,-2.8 M178.4,378.6 l2.6,-2.8 M183.7,378.6 l2.6,-2.8 M189.0,378.6 l2.6,-2.8 M194.3,378.6 l2.6,-2.8 M199.6,378.6 l2.6,-2.8 M204.9,378.6 l2.6,-2.8 M210.2,378.6 l2.6,-2.8 M215.5,378.6 l2.6,-2.8 M220.8,378.6 l2.6,-2.8 M226.1,378.6 l2.6,-2.8 M231.4,378.6 l2.6,-2.8 M236.7,378.6 l2.6,-2.8 M242.0,378.6 l2.6,-2.8 M247.3,378.6 l2.6,-2.8 M252.6,378.6 l2.6,-2.8" stroke="#a3b7e2" stroke-width="2" fill="none"/>
<path d="M114,366 L117,363 H127 V374 L124,377 H114 Z" fill="#f2f2f2" stroke="#c9c9c9" stroke-width=".8"/><path d="M124,366 L127,363 V374 L124,377 Z" fill="#cfcfcf"/><path d="M114,366 H124 V377" fill="none" stroke="#d8d8d8" stroke-width=".8"/>
<circle cx="111.4" cy="360.9" r="1.3" fill="none" stroke="#111" stroke-width="1"/><path d="M111.4,362.2 V377.4 M109.2,363.8 H113.6 M107.6,366 Q108,369.6 111.4,369.8 Q114.8,369.6 115.2,366" fill="none" stroke="#111" stroke-width="1.1"/>
<defs><radialGradient id="rg" cx=".4" cy=".35" r=".7"><stop offset="0" stop-color="#fff"/><stop offset="1" stop-color="#cfd3da"/></radialGradient></defs><circle cx="274.8" cy="368.1" r="7.6" fill="url(#rg)" stroke="#8a8a8a" stroke-width="1"/><circle cx="274.8" cy="368.1" r="2.9" fill="#3d4350"/>
<circle cx="1623.5" cy="304.3" r="5.6" fill="#222"/><rect x="1620.1" y="303.4" width="6.8" height="1.8" fill="#f2f2f2"/>
<path d="M1896.6,301.8 V308.6 L1902.6,305.2 Z M1902.6,301.8 V308.6 L1908.6,305.2 Z" fill="#222"/>
<path d="M1732.5,334.2 H1742 M1730.4,336.6 V342 M1732.5,344.4 H1742" stroke="#555" stroke-width="1"/><rect x="1728.2" y="332" width="4.2" height="4.2" fill="#fff" stroke="#666" stroke-width=".9"/><rect x="1741.6" y="331.6" width="4.6" height="4.6" fill="#5aa3e0"/><rect x="1727.8" y="342" width="4.6" height="4.6" fill="#5aa3e0"/><rect x="1741.6" y="342" width="4.6" height="4.6" fill="#5aa3e0"/>
<circle cx="1770.5" cy="331.7" r="2.5" fill="#7cc4f2"/><circle cx="1776.8" cy="335.4" r="2.5" fill="#7cc4f2"/><circle cx="1776.8" cy="342.6" r="2.5" fill="#7cc4f2"/><circle cx="1770.5" cy="346.3" r="2.5" fill="#7cc4f2"/><circle cx="1764.2" cy="342.6" r="2.5" fill="#7cc4f2"/><circle cx="1764.2" cy="335.4" r="2.5" fill="#d8d4cc"/>
<path d="M1795.4,344.6 Q1803,346.6 1808,342 Q1811.6,338.4 1815.6,338.6" stroke="#777" stroke-width="1" fill="none"/><ellipse cx="1797.6" cy="339.4" rx="2.3" ry="1.9" fill="#fff" stroke="#777" stroke-width=".9"/><circle cx="1805.6" cy="338.2" r="2.4" fill="#4f9be0"/><circle cx="1813.4" cy="334" r="2.4" fill="#4f9be0"/>
<path d="M1729.6,370.2 V381.4 Q1729.6,384.8 1737.3,384.8 Q1745,384.8 1745,381.4 V370.2 Z" fill="#dcdcdc" stroke="#444" stroke-width="1.1"/><ellipse cx="1737.3" cy="370.2" rx="7.7" ry="3.5" fill="#e8e8e8" stroke="#444" stroke-width="1.1"/>
<path d="M1861,374.6 h6.8 l-3.4,4.8 Z M1861,487.2 h6.8 l-3.4,4.8 Z" fill="#222"/>
<path d="M1733.4,405.4 v14.6 l3.3,-3 l2.5,5.4 l2.2,-1 l-2.4,-5.3 h4.5 Z" fill="#fff" stroke="#333" stroke-width="1.1" stroke-linejoin="round"/>
<path d="M1733.4,442.6 v14.6 l3.3,-3 l2.5,5.4 l2.2,-1 l-2.4,-5.3 h4.5 Z" fill="#f4f4f4" stroke="#555" stroke-width="1.1" stroke-linejoin="round"/>
<path d="M1853.6,409.8 L1861.8,418 M1861.8,409.8 L1853.6,418 M1853.6,447.6 L1861.8,455.8 M1861.8,447.6 L1853.6,455.8" stroke="#555" stroke-width="1.2"/>
<path d="M1733.4,481.6 A8.3 8.3 0 1 0 1737.8,480.1" fill="none" stroke="#444" stroke-width="1.1"/><path d="M1730.8,479.2 L1735.6,480.2 L1732.4,484 Z" fill="#444"/><circle cx="1737.8" cy="488.5" r="1.2" fill="#333"/>
<defs><linearGradient id="cbg" x1="0" y1="0" x2="0" y2="1"><stop offset="0" stop-color="#f4f4f4"/><stop offset="1" stop-color="#cfcfcf"/></linearGradient></defs><rect x="1730.5" y="519" width="15.2" height="15.2" rx="3" fill="url(#cbg)" stroke="#444" stroke-width="1.1"/>
<path d="M1862.4,558.6 h5.4 l-2.7,-3.8 Z M1862.4,569.8 h5.4 l-2.7,3.8 Z" fill="#222"/>
<circle cx="1621.7" cy="607.7" r="7.6" fill="#111"/><rect x="1620.5" y="606.4" width="2.6" height="5.6" fill="#fff"/><rect x="1619.6" y="606.4" width="2" height="1.4" fill="#fff"/><rect x="1619.6" y="610.8" width="4.4" height="1.4" fill="#fff"/><circle cx="1621.7" cy="603.6" r="1.5" fill="#fff"/>
<path d="M1105,593.5 L1108,596 L1105,598.5 L1108,601 L1105,603.5 L1108,606 L1105,608.5 L1108,611 L1105,613.5" stroke="#dedede" stroke-width="1" fill="none"/>
<path d="M1193.2,599.4 h5.8 l-2.9,-3.8 Z M1193.2,608 h5.8 l-2.9,3.8 Z" fill="#222"/>
<path d="M1224.2,598 A8.4 8.4 0 1 0 1230.1,595.1" fill="none" stroke="#4a5560" stroke-width="1.4"/><path d="M1221.4,595 L1227,596.2 L1223.6,600.8 Z" fill="#4a5560"/><circle cx="1230.2" cy="603.6" r="1.4" fill="#333"/><path d="M1243.4,601.4 h6.2 l-3.1,4.6 Z" fill="#222"/>
</svg>

</body></html>
